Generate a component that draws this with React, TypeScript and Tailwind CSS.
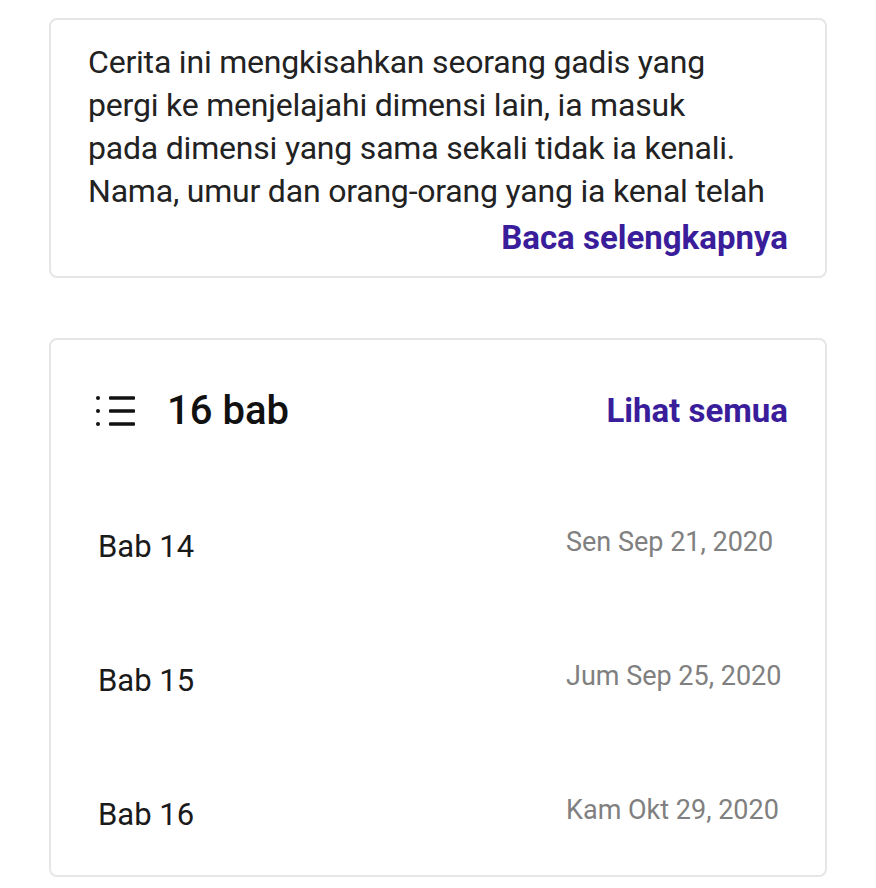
const chapters = [
  { title: 'Bab 14', date: 'Sen Sep 21, 2020' },
  { title: 'Bab 15', date: 'Jum Sep 25, 2020' },
  { title: 'Bab 16', date: 'Kam Okt 29, 2020' },
];

function ListIcon() {
  return (
    <svg width="40" height="32" viewBox="0 0 40 32" className="shrink-0">
      <circle cx="3" cy="3" r="2" fill="#111" />
      <circle cx="3" cy="16" r="2" fill="#111" />
      <circle cx="3" cy="29" r="2" fill="#111" />
      <rect x="14" y="1.2" width="26" height="3.6" rx="1" fill="#111" />
      <rect x="14" y="14.2" width="26" height="3.6" rx="1" fill="#111" />
      <rect x="14" y="27.2" width="26" height="3.6" rx="1" fill="#111" />
    </svg>
  );
}

export default function App() {
  return (
    <div className="min-h-screen bg-white px-[49px] pt-[18px] font-['Roboto',sans-serif]">
      <div className="rounded-lg border-2 border-[#e6e6e6] px-[37px] pt-[21px] pb-[18px]">
        <p className="text-[32px] leading-[43px] tracking-[-0.2px] text-[#222]">
          Cerita ini mengkisahkan seorang gadis yang
          <br />
          pergi ke menjelajahi dimensi lain, ia masuk
          <br />
          pada dimensi yang sama sekali tidak ia kenali.
          <br />
          Nama, umur dan orang-orang yang ia kenal telah
        </p>
        <div className="mt-[5px] text-right text-[33px] font-bold leading-[40px] text-[#3a1d9a]">
          Baca selengkapnya
        </div>
      </div>

      <div className="mt-[60px] rounded-lg border-2 border-[#e6e6e6] pb-[40px]">
        <div className="flex items-center justify-between pl-[44px] pr-[37px] pt-[49px]">
          <div className="flex h-[44px] items-center gap-[32px]">
            <ListIcon />
            <span className="text-[40px] font-medium leading-[44px] text-[#111]">16 bab</span>
          </div>
          <span className="text-[33px] font-bold leading-[44px] text-[#3a1d9a]">Lihat semua</span>
        </div>
        <div className="mt-[89px] flex flex-col gap-[89px]">
          {chapters.map((c) => (
            <div key={c.title} className="flex h-[45px] items-start pl-[47px]">
              <span className="w-[468px] pt-[5px] text-[31px] leading-[40px] text-[#1a1a1a]">{c.title}</span>
              <span className="text-[27px] leading-[40px] text-[#808080]">{c.date}</span>
            </div>
          ))}
        </div>
      </div>
    </div>
  );
}
